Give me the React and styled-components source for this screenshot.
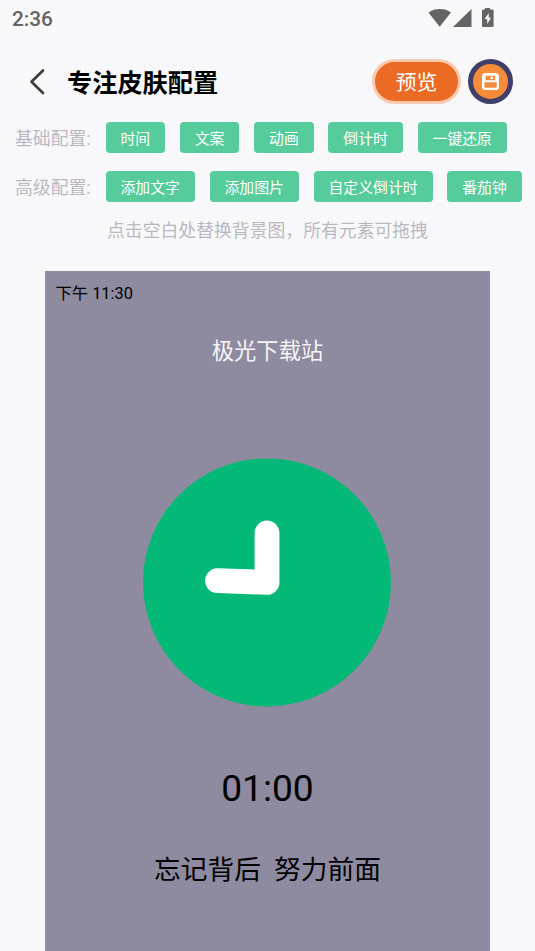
import React from 'react';
import styled, { createGlobalStyle } from 'styled-components';

const GlobalStyle = createGlobalStyle`
  * {
    box-sizing: border-box;
  }

  body {
    margin: 0;
    background-color: #f8f8fb;
    font-family: Roboto, "Noto Sans CJK SC", sans-serif;
    overflow: hidden;
  }

  button {
    font-family: inherit;
    border: none;
    cursor: pointer;
  }

  svg {
    display: block;
  }
`;

const Screen = styled.div`
  width: 535px;
  height: 951px;
  display: flex;
  flex-direction: column;
  overflow: hidden;
`;

const StatusBar = styled.div`
  height: 36px;
  padding: 0 41px 0 12px;
  display: flex;
  flex-shrink: 0;
  align-items: center;
  justify-content: space-between;
  color: #646466;
  font-size: 20.8px;
  font-weight: 500;

  span {
    padding-top: 2px;
  }
`;

const Header = styled.header`
  height: 86px;
  padding: 5px 22px 0 28px;
  display: flex;
  flex-shrink: 0;
  align-items: center;
`;

const BackButton = styled.button`
  padding: 0;
  background-color: transparent;
`;

const Title = styled.h1`
  flex: 1;
  margin: 0 0 0 19px;
  padding-top: 4px;
  font-size: 25.2px;
  line-height: 36px;
  font-weight: 700;
  color: #000;
`;

const PreviewButton = styled.button`
  width: 89px;
  height: 45px;
  padding: 2px 0 0;
  margin-right: 7px;
  border: 3px solid #fdcab0;
  border-radius: 23px;
  background-color: #eb6b24;
  color: #fff;
  font-size: 20.8px;
  line-height: 36px;
`;

const SaveButton = styled.button`
  width: 45px;
  height: 45px;
  padding: 0;
  display: flex;
  align-items: center;
  justify-content: center;
  border: 5px solid #3f3f69;
  border-radius: 50%;
  background-color: #f68b3a;
`;

const ConfigRow = styled.div`
  height: 31px;
  margin-bottom: 18px;
  padding-left: 15px;
  display: flex;
  flex-shrink: 0;
  align-items: center;
  gap: 14.86px;
`;

const ConfigLabel = styled.span`
  width: 75.7px;
  flex-shrink: 0;
  color: #b9b8c1;
  font-size: 17.83px;
  line-height: 26px;
  padding-top: 2px;
  white-space: nowrap;
`;

const Chip = styled.button`
  height: 31px;
  padding: 2px 14.86px 0;
  flex-shrink: 0;
  border-radius: 4px;
  background-color: #56cb9c;
  color: #fff;
  font-size: 14.86px;
  line-height: 30px;
  white-space: nowrap;
`;

const Hint = styled.p`
  margin: -3px 0 27px;
  color: #b9b8c1;
  font-size: 17.83px;
  line-height: 27px;
  text-align: center;
`;

const Canvas = styled.main`
  width: 445.8px;
  height: 700px;
  margin: 0 auto;
  display: flex;
  flex-direction: column;
  flex-shrink: 0;
  align-items: center;
  background-color: #8e8a9f;
`;

const ClockText = styled.span`
  align-self: flex-start;
  margin: 11px 0 0 10.8px;
  font-size: 16.35px;
  line-height: 24px;
`;

const SkinName = styled.span`
  margin: 29px 0 90px;
  color: #f5f4f8;
  font-size: 22.3px;
  line-height: 33px;
`;

const Countdown = styled.span`
  margin-top: 59.5px;
  font-size: 37.15px;
  line-height: 44px;
`;

const Motto = styled.span`
  margin-top: 40px;
  font-size: 26.7px;
  line-height: 38px;
  white-space: pre;
`;

const configs = [
  { label: '基础配置:', items: ['时间', '文案', '动画', '倒计时', '一键还原'] },
  { label: '高级配置:', items: ['添加文字', '添加图片', '自定义倒计时', '番茄钟'] },
];

const StatusIcons = () => (
  <svg width="66" height="20" viewBox="0 0 66 20" fill="#646466">
    <path d="M.5 4.5C3.7 2 7.5.9 11.7.9S19.7 2 22.9 4.5L11.7 18.8z" />
    <path d="M43.5 1v18H25z" />
    <path
      fillRule="evenodd"
      d="M57 0h5v1.5h2.3a1.3 1.3 0 0 1 1.3 1.3v14.9a1.3 1.3 0 0 1-1.3 1.3h-9a1.3 1.3 0 0 1-1.3-1.3V2.8a1.3 1.3 0 0 1 1.3-1.3H57zM60.800 5l-4.200 6h2.600v5l3.800-6.200h-2.200z"
    />
  </svg>
);

const BackIcon = () => (
  <svg width="20" height="28" viewBox="0 0 20 28" fill="none">
    <path d="M15 2.5L3.5 13.7L15 25" stroke="#3d3d42" strokeWidth="2.7" strokeLinecap="round" strokeLinejoin="round" />
  </svg>
);

const SaveIcon = () => (
  <svg width="17" height="17" viewBox="0 0 17 17" fill="#fff">
    <path
      fillRule="evenodd"
      d="M3.5 0h9.7Q17 .2 17 4v10a3 3 0 0 1-3 3H3a3 3 0 0 1-3-3V3.5A3.5 3.5 0 0 1 3.5 0zM3.5 2.700v4.600H13.200V2.700zM2.300 9.300v4.400a1 1 0 0 0 1 1h10.400a1 1 0 0 0 1-1V9.300z"
    />
    <path d="M8.7 3.700h2.300v2.300H8.700z" />
  </svg>
);

const ClockFace = () => (
  <svg width="248" height="249" viewBox="0 0 248 249">
    <circle cx="124" cy="124.4" r="124" fill="#04b978" />
    <path
      d="M124 75V124.4L74.5 122.7"
      fill="none"
      stroke="#fff"
      strokeWidth="24.8"
      strokeLinecap="round"
      strokeLinejoin="round"
    />
  </svg>
);

const App = () => {
  return (
    <Screen>
      <GlobalStyle />

      <StatusBar>
        <span>2:36</span>
        <StatusIcons />
      </StatusBar>

      <Header>
        <BackButton aria-label="返回"><BackIcon /></BackButton>
        <Title>专注皮肤配置</Title>
        <PreviewButton>预览</PreviewButton>
        <SaveButton aria-label="保存"><SaveIcon /></SaveButton>
      </Header>

      {configs.map(({ label, items }) => (
        <ConfigRow key={label}>
          <ConfigLabel>{label}</ConfigLabel>
          {items.map((item) => <Chip key={item}>{item}</Chip>)}
        </ConfigRow>
      ))}

      <Hint>点击空白处替换背景图，所有元素可拖拽</Hint>

      <Canvas>
        <ClockText>下午 11:30</ClockText>
        <SkinName>极光下载站</SkinName>
        <ClockFace />
        <Countdown>01:00</Countdown>
        <Motto>{'忘记背后  努力前面'}</Motto>
      </Canvas>
    </Screen>
  );
};

export default App;
